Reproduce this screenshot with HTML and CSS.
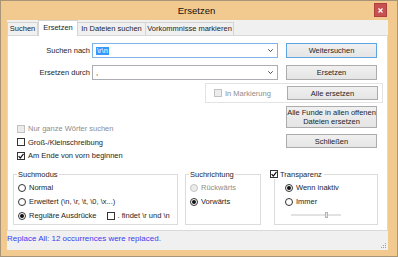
FILE: index.html
```html
<!DOCTYPE html>
<html lang="de">
<head>
  <meta charset="UTF-8" />
  <title>Ersetzen</title>
  <link rel="stylesheet" href="styles.css">
</head>
<body>
  <div class="window">
    <div class="titlebar">
      <span class="title">Ersetzen</span>
      <span class="close">
        <svg width="5" height="5" viewBox="0 0 5 5"><path d="M0.5 0.5 L4.5 4.5 M4.5 0.5 L0.5 4.5" stroke="#fff" stroke-width="1.2"/></svg>
      </span>
    </div>

    <div class="client">
      <div class="tabs">
        <span class="tab w1">Suchen</span>
        <span class="tab active w2">Ersetzen</span>
        <span class="tab w3">In Dateien suchen</span>
        <span class="tab w4">Vorkommnisse markieren</span>
      </div>

      <div class="panel">
        <div class="row">
          <span class="label">Suchen nach</span>
          <div class="combo focus">
            <span class="sel">\r\n</span>
            <svg class="chev" width="5" height="3" viewBox="0 0 5 3"><path d="M0.3 0.3 L2.5 2.6 L4.7 0.3" fill="none" stroke="#333" stroke-width="0.9"/></svg>
          </div>
          <button class="btn focus">Weitersuchen</button>
        </div>

        <div class="row second">
          <span class="label">Ersetzen durch</span>
          <div class="combo">
            <span>,</span>
            <svg class="chev" width="5" height="3" viewBox="0 0 5 3"><path d="M0.3 0.3 L2.5 2.6 L4.7 0.3" fill="none" stroke="#333" stroke-width="0.9"/></svg>
          </div>
          <button class="btn">Ersetzen</button>
        </div>

        <div class="marking">
          <span class="opt disabled"><span class="box"></span>In Markierung</span>
          <button class="btn">Alle ersetzen</button>
        </div>

        <div class="middle">
          <div class="options">
            <span class="opt disabled"><span class="box"></span>Nur ganze Wörter suchen</span>
            <span class="opt"><span class="box"></span>Groß-/Kleinschreibung</span>
            <span class="opt"><span class="box checked"><svg width="6" height="6" viewBox="0 0 6 6"><path d="M0.6 3.2 L2.3 5 L5.5 0.8" fill="none" stroke="#111" stroke-width="1.2"/></svg></span>Am Ende von vorn beginnen</span>
          </div>
          <div class="actions">
            <button class="btn tall">Alle Funde in allen offenen<br>Dateien ersetzen</button>
            <button class="btn">Schließen</button>
          </div>
        </div>

        <div class="groups">
          <fieldset class="mode">
            <legend>Suchmodus</legend>
            <span class="opt"><span class="radio"></span>Normal</span>
            <span class="opt"><span class="radio"></span>Erweitert (\n, \r, \t, \0, \x...)</span>
            <span class="opt"><span class="radio on"></span>Reguläre Ausdrücke<span class="box gap"></span>. findet \r und \n</span>
          </fieldset>

          <fieldset class="direction">
            <legend>Suchrichtung</legend>
            <span class="opt disabled"><span class="radio"></span>Rückwärts</span>
            <span class="opt"><span class="radio on"></span>Vorwärts</span>
          </fieldset>

          <fieldset class="transparency">
            <legend><span class="opt"><span class="box checked"><svg width="6" height="6" viewBox="0 0 6 6"><path d="M0.6 3.2 L2.3 5 L5.5 0.8" fill="none" stroke="#111" stroke-width="1.2"/></svg></span>Transparenz</span></legend>
            <span class="opt"><span class="radio on"></span>Wenn inaktiv</span>
            <span class="opt"><span class="radio"></span>Immer</span>
            <div class="slider"><span class="thumb"></span></div>
          </fieldset>
        </div>
      </div>

      <div class="status">
        <span>Replace All: 12 occurrences were replaced.</span>
        <svg class="grip" width="6" height="6" viewBox="0 0 6 6">
          <rect x="4" y="0" width="1" height="1" fill="#a0a0a0"/>
          <rect x="2" y="2" width="1" height="1" fill="#a0a0a0"/>
          <rect x="4" y="2" width="1" height="1" fill="#a0a0a0"/>
          <rect x="0" y="4" width="1" height="1" fill="#a0a0a0"/>
          <rect x="2" y="4" width="1" height="1" fill="#a0a0a0"/>
          <rect x="4" y="4" width="1" height="1" fill="#a0a0a0"/>
        </svg>
      </div>
    </div>
  </div>
</body>
</html>
```

FILE: styles.css
```css
* {
  box-sizing: border-box;
}

body {
  margin: 0;
  font-family: "Liberation Sans", Arial, sans-serif;
  font-size: 7.5px;
  color: #1e1e1e;
  background: #fff;
}

.window {
  width: 398px;
  height: 257px;
  border: 1px solid #a89578;
  background: #f2c98f;
  display: flex;
  flex-direction: column;
}

.titlebar {
  height: 19px;
  display: grid;
  grid-template-columns: 1fr auto 1fr;
}

.title {
  grid-column: 2;
  font-size: 9.5px;
  line-height: 19px;
  color: #111;
  padding-right: 5px;
}

.close {
  grid-column: 3;
  justify-self: end;
  width: 13px;
  height: 14px;
  margin: 2px 10px 0 0;
  background: #c75050;
  border: 1px solid #b04040;
  display: flex;
  align-items: center;
  justify-content: center;
}

.client {
  flex: 1;
  margin: 0 9px 6px 6px;
  background: #f0f0f0;
  display: flex;
  flex-direction: column;
}

/* tabs */
.tabs {
  height: 15px;
  display: flex;
  align-items: flex-end;
}

.tab {
  height: 13px;
  border: 1px solid #d4d4d4;
  border-bottom: none;
  background: #f0f0f0;
  text-align: center;
  line-height: 12px;
}

.tab + .tab {
  border-left: none;
}

.tab.active {
  height: 16px;
  margin-bottom: -1px;
  background: #fff;
  border-left: 1px solid #d4d4d4;
  line-height: 13px;
  position: relative;
  z-index: 1;
}

.w1 { width: 31px; }
.w2 { width: 40px; }
.w3 { width: 68px; }
.w4 { width: 88px; }

.panel {
  height: 196px;
  background: #fff;
  border: 1px solid #d9d9d9;
  padding-top: 7px;
}

.row {
  height: 15px;
  display: flex;
  align-items: center;
}

.row.second {
  margin-top: 7px;
}

.label {
  width: 82px;
  margin-right: 2px;
  text-align: right;
}

.combo {
  width: 186px;
  height: 15px;
  border: 1px solid #abadb3;
  padding: 0 3px;
  display: flex;
  align-items: center;
  justify-content: space-between;
}

.combo.focus {
  border-color: #7eb4ea;
}

.sel {
  background: #3399ff;
  color: #fff;
  padding: 0 1px;
  line-height: 8px;
}

.chev {
  margin-right: 1px;
}

.btn {
  width: 91px;
  height: 15px;
  margin: 0 0 0 8px;
  padding: 0;
  font: inherit;
  color: #1e1e1e;
  border: 1px solid #acacac;
  background: linear-gradient(#f0f0f0, #e5e5e5);
  line-height: 9px;
}

.btn.focus {
  border-color: #5ea5e3;
}

.marking {
  width: 178px;
  height: 20px;
  margin: 3px 0 0 197px;
  border: 1px solid #e3e3e3;
  padding: 0 4px 0 8px;
  display: flex;
  align-items: center;
  justify-content: space-between;
}

.marking .btn {
  margin: 0;
  height: 14px;
}

.middle {
  margin-top: 3px;
  display: flex;
}

.options {
  width: 278px;
  padding: 16px 0 0 9px;
  display: flex;
  flex-direction: column;
}

.options .opt {
  height: 13.5px;
}

.actions {
  width: 91px;
  display: flex;
  flex-direction: column;
  gap: 6px;
}

.actions .btn {
  margin: 0;
  height: 14px;
}

.actions .btn.tall {
  height: 22px;
}

/* checkboxes and radios */
.opt {
  height: 14px;
  display: flex;
  align-items: center;
  gap: 3px;
  white-space: nowrap;
}

.opt.disabled {
  color: #8d8d8d;
}

.box {
  width: 8px;
  height: 8px;
  border: 1px solid #333;
  background: #fff;
  display: flex;
  align-items: center;
  justify-content: center;
  flex-shrink: 0;
}

.disabled .box,
.disabled .radio {
  border-color: #c2c2c2;
  background: #ececec;
}

.box.gap {
  margin: 0 0 0 7px;
}

.radio {
  width: 8px;
  height: 8px;
  border: 1px solid #333;
  border-radius: 50%;
  background: #fff;
  display: flex;
  align-items: center;
  justify-content: center;
  flex-shrink: 0;
}

.radio.on::after {
  content: "";
  width: 4px;
  height: 4px;
  border-radius: 50%;
  background: #111;
}

/* group boxes */
.groups {
  margin-top: 7px;
  padding-left: 5px;
  display: flex;
}

fieldset {
  margin: 0;
  height: 55px;
  min-width: 0;
  border: 1px solid #dcdcdc;
  padding: 2px 4px 1px;
}

legend {
  padding: 0 1px;
  margin-left: -1px;
  line-height: 9px;
}

.mode {
  width: 165px;
}

.direction {
  width: 76px;
  margin-left: 7px;
}

.transparency {
  width: 104px;
  margin-left: 13px;
  padding-left: 10px;
}

.transparency legend {
  margin-left: -15px;
  padding: 0 2px 0 0;
}

.transparency legend .opt {
  height: 9px;
  gap: 2px;
}

.slider {
  width: 50px;
  height: 12px;
  margin-left: 6px;
  display: flex;
  align-items: center;
  justify-content: flex-end;
  padding-right: 13px;
  background: linear-gradient(#e2e2e2, #e2e2e2) center / 100% 2px no-repeat;
}

.thumb {
  width: 3px;
  height: 6px;
  border: 1px solid #b4b4b4;
  background: #ececec;
}

.status {
  flex: 1;
  display: flex;
  justify-content: space-between;
  align-items: flex-start;
  padding-top: 2px;
  font-size: 8px;
  line-height: 12px;
  color: #3c3cf0;
}

.grip {
  align-self: flex-end;
  margin: 0 1px 1px 0;
}
```
